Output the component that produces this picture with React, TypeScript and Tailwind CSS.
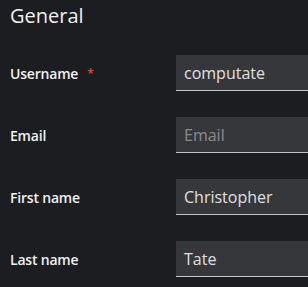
import React from "react";

const fields = [
  { label: "Username", value: "computate", required: true },
  { label: "Email", value: "", placeholder: "Email" },
  { label: "First name", value: "Christopher" },
  { label: "Last name", value: "Tate" },
];

export default function App() {
  return (
    <div
      className="w-[308px] h-[287px] overflow-hidden bg-[#1b1d21] text-[#e0e0e0]"
      style={{ fontFamily: '"Open Sans", "Noto Sans", sans-serif' }}
    >
      <h1 className="pl-[10px] pt-[3px] text-[20px] leading-[26px] font-normal text-[#f0f0f0]">
        General
      </h1>
      <div className="flex flex-col gap-[26px] mt-[26px]">
        {fields.map((f) => (
          <div key={f.label} className="flex items-center">
            <div className="w-[176px] pl-[10px] text-[14px] font-semibold tracking-[-0.2px] text-[#f0f0f0] flex items-center">
              {f.label}
              {f.required && (
                <span className="ml-[9px] text-[#e0473a] text-[12px] relative top-[1px]">*</span>
              )}
            </div>
            <div className="flex-1 h-[36px] bg-[#36373b] border-b border-[#c7c7c7] flex items-center pl-[8px]">
              {f.value ? (
                <span className="text-[16px] text-[#e0e0e0]">{f.value}</span>
              ) : (
                <span className="text-[16px] text-[#8a8d90]">{f.placeholder}</span>
              )}
            </div>
          </div>
        ))}
      </div>
    </div>
  );
}
